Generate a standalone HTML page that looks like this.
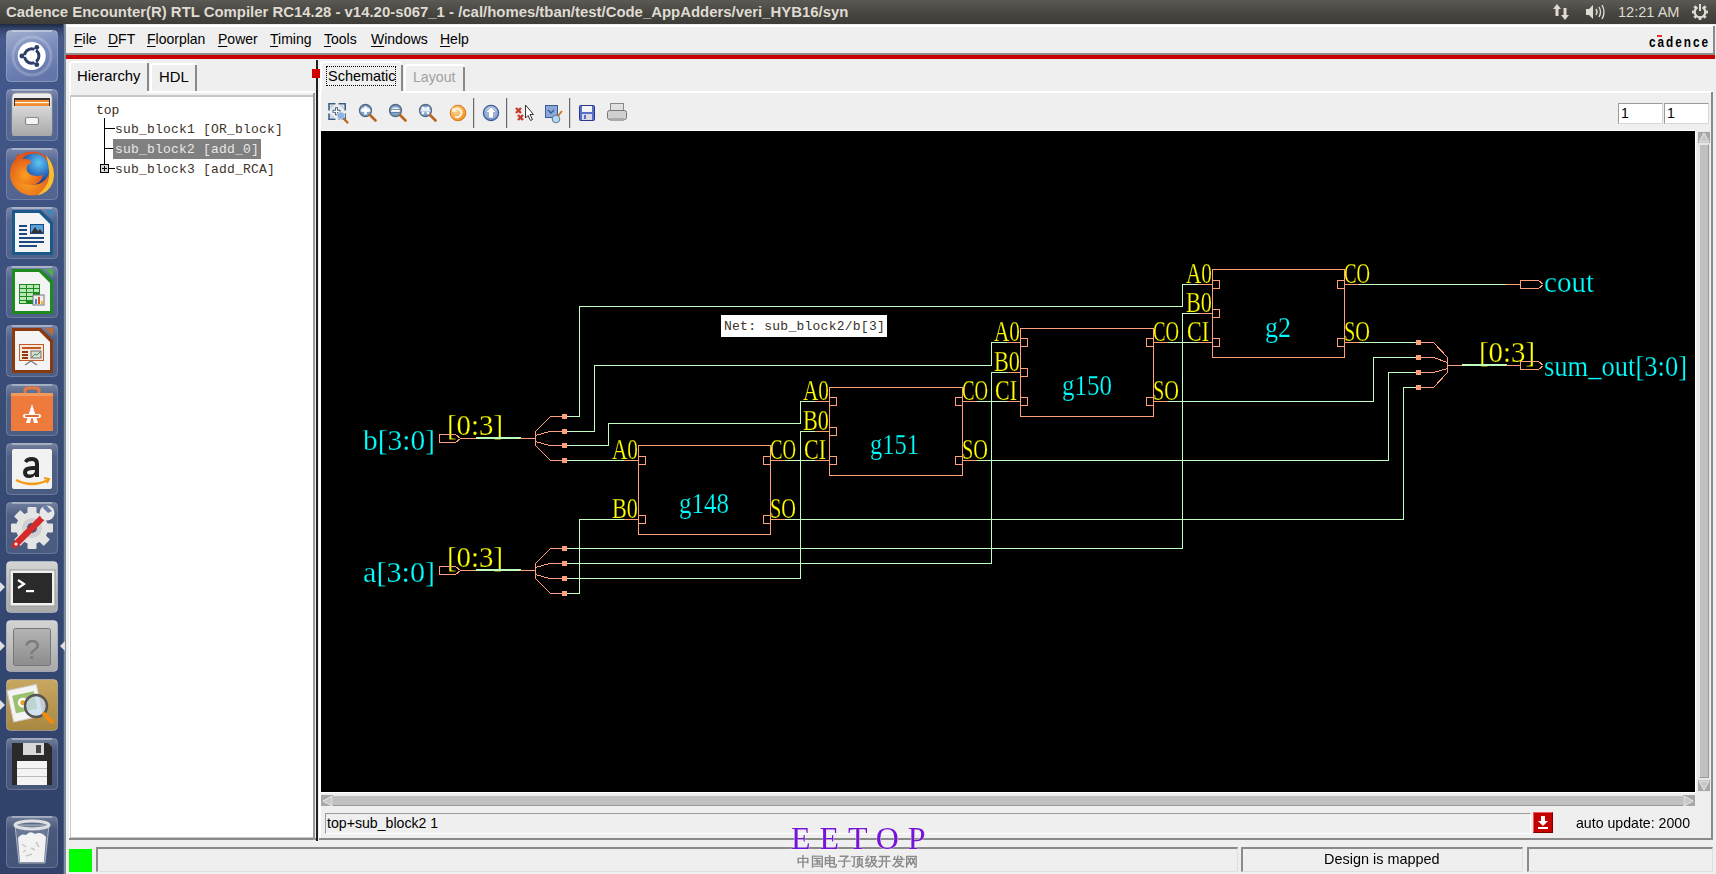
<!DOCTYPE html>
<html><head><meta charset="utf-8">
<style>
*{margin:0;padding:0;box-sizing:border-box}
html,body{width:1716px;height:874px;overflow:hidden;background:#efefef;font-family:"Liberation Sans",sans-serif;position:relative}
.a{position:absolute}
#title{left:0;top:0;width:1716px;height:24px;background:linear-gradient(#5b5953,#45443f 60%,#3e3d39);}
#title .t{left:6px;top:4px;font-weight:bold;font-size:14px;color:#dfdbd2;white-space:nowrap;letter-spacing:0px;transform:scaleX(1.065);transform-origin:0 0}
#launch{left:0;top:24px;width:65px;height:850px;background:linear-gradient(180deg,#1e2840 0px,#34466c 5px,#46598a 14px,#42578a 60px,#384c76 45%,#30426a 100%)}
.tile{position:absolute;left:6px;width:52px;height:52px;border-radius:5px;background:rgba(255,255,255,0.10);box-shadow:inset 0 0 0 1px rgba(255,255,255,0.18)}
.menu{top:30px;font-size:15px;color:#000;transform:scaleX(0.933);transform-origin:0 0;line-height:17px}
.menu u{text-decoration:underline;text-decoration-thickness:1px;text-underline-offset:2px}
.mono{font-family:"Liberation Mono",monospace}
.ui{font-size:15px;transform:scaleX(0.925);transform-origin:0 0;white-space:nowrap;line-height:17px}
.sep{width:2px;height:30px;background:#7a7a7a;top:98px}
</style></head><body>
<!-- title bar -->
<div id="title" class="a"><div class="a t">Cadence Encounter(R) RTL Compiler RC14.28 - v14.20-s067_1 - /cal/homes/tban/test/Code_AppAdders/veri_HYB16/syn</div>
<svg class="a" style="left:1540px;top:0" width="176" height="24">
<g fill="#dfdbd2">
<path d="M17 4 L13 9 H15.5 V16 H18.5 V9 H21Z"/>
<path d="M25 20 L29 15 H26.5 V8 H23.5 V15 H21Z"/>
<path d="M46 9 H49 L53 5 V19 L49 15 H46Z"/>
</g>
<g fill="none" stroke="#dfdbd2" stroke-width="1.4"><path d="M56 9 Q58 12 56 15"/><path d="M59 7 Q62 12 59 17"/><path d="M62 5 Q66 12 62 19"/></g>
<g transform="translate(160,12)"><g fill="#dfdbd2"><rect x="-1.4" y="-8" width="2.8" height="3.5" transform="rotate(45)"/><rect x="-1.4" y="-8" width="2.8" height="3.5" transform="rotate(-45)"/><rect x="-1.4" y="4.5" width="2.8" height="3.5"/><rect x="-8" y="-1.4" width="3.5" height="2.8"/><rect x="4.5" y="-1.4" width="3.5" height="2.8"/><rect x="-1.4" y="4.5" width="2.8" height="3.5" transform="rotate(45)"/><rect x="-1.4" y="4.5" width="2.8" height="3.5" transform="rotate(-45)"/></g>
<path d="M-2.6 -4.6 A5.3 5.3 0 1 0 2.6 -4.6" fill="none" stroke="#dfdbd2" stroke-width="2.2"/><rect x="-1" y="-8" width="2" height="7" fill="#dfdbd2"/></g>
</svg>
<div class="a" style="left:1618px;top:3px;font-size:15px;color:#dfdbd2;white-space:nowrap;transform:scaleX(0.97);transform-origin:0 0">12:21 AM</div>
</div>

<!-- launcher -->
<div id="launch" class="a"><div class="a" style="left:63px;top:0;width:2px;height:850px;background:linear-gradient(90deg,#2c3c60,#8aaad0)"></div>
<svg class="a" style="left:6px;top:6px" width="52" height="52"><defs><linearGradient id="ub" x1="0" y1="0" x2="0.3" y2="1"><stop offset="0" stop-color="#a4b0d0"/><stop offset="0.5" stop-color="#7a8cbc"/><stop offset="1" stop-color="#6476aa"/></linearGradient></defs><rect x="0.5" y="0.5" width="51" height="51" rx="4" fill="url(#ub)" stroke="rgba(255,255,255,0.3)"/><circle cx="26" cy="26" r="19" fill="none" stroke="rgba(255,255,255,0.2)" stroke-width="3"/><path d="M6 1 H46" stroke="rgba(255,255,255,0.7)" stroke-width="1.2"/><circle cx="25.7" cy="26" r="14" fill="#fff"/>
<circle cx="25.7" cy="26" r="7.2" fill="none" stroke="#2c3e6a" stroke-width="3"/>
<g stroke="#fff" stroke-width="1.6"><path d="M25.7 26 L14 26" /><path d="M25.7 26 L31.5 16"/><path d="M25.7 26 L31.5 36"/></g>
<circle cx="15.8" cy="26" r="2.4" fill="#2c3e6a"/>
<circle cx="30.8" cy="17.3" r="2.4" fill="#2c3e6a"/>
<circle cx="30.8" cy="34.7" r="2.4" fill="#2c3e6a"/></svg>
<svg class="a" style="left:6px;top:65px" width="52" height="52"><defs><linearGradient id="tg" x1="0" y1="0" x2="0" y2="1"><stop offset="0" stop-color="#fff" stop-opacity="0.30"/><stop offset="0.25" stop-color="#fff" stop-opacity="0.12"/><stop offset="1" stop-color="#fff" stop-opacity="0.10"/></linearGradient></defs><rect x="0.5" y="0.5" width="51" height="51" rx="4" fill="url(#tg)" stroke="rgba(255,255,255,0.22)"/><path d="M6 1 H46" stroke="rgba(255,255,255,0.7)" stroke-width="1.2"/><defs><linearGradient id="fl" x1="0" y1="0" x2="0" y2="1"><stop offset="0" stop-color="#f0f0f0"/><stop offset="1" stop-color="#c8c8c8"/></linearGradient>
<linearGradient id="fd" x1="0" y1="0" x2="0" y2="1"><stop offset="0" stop-color="#d8d8d8"/><stop offset="1" stop-color="#a8a8a8"/></linearGradient></defs>
<path d="M6 8 Q6 4 10 4 H42 Q46 4 46 8 V44 H6Z" fill="url(#fl)" stroke="#999" stroke-width="0.8"/>
<rect x="8" y="9" width="36" height="10" fill="#333"/>
<rect x="9" y="11" width="34" height="6" fill="#f08a30"/><rect x="9" y="13" width="34" height="1.2" fill="#fff4d8"/>
<path d="M7 17 H45 L46 45 Q46 47 44 47 H8 Q6 47 6 45Z" fill="url(#fd)"/>
<rect x="19.5" y="28.5" width="13" height="7" rx="1.5" fill="#f4f4f4" stroke="#8a8a8a" stroke-width="1.2"/></svg>
<svg class="a" style="left:6px;top:124px" width="52" height="52"><defs><linearGradient id="tg" x1="0" y1="0" x2="0" y2="1"><stop offset="0" stop-color="#fff" stop-opacity="0.30"/><stop offset="0.25" stop-color="#fff" stop-opacity="0.12"/><stop offset="1" stop-color="#fff" stop-opacity="0.10"/></linearGradient></defs><rect x="0.5" y="0.5" width="51" height="51" rx="4" fill="url(#tg)" stroke="rgba(255,255,255,0.22)"/><path d="M6 1 H46" stroke="rgba(255,255,255,0.7)" stroke-width="1.2"/><defs><radialGradient id="ffb" cx="0.65" cy="0.3" r="0.7"><stop offset="0" stop-color="#60c8f0"/><stop offset="0.6" stop-color="#2a6ac0"/><stop offset="1" stop-color="#1a3080"/></radialGradient>
<radialGradient id="ffo" cx="0.4" cy="0.7" r="0.7"><stop offset="0" stop-color="#f8a020"/><stop offset="1" stop-color="#e04a18"/></radialGradient></defs>
<circle cx="26" cy="25.5" r="22" fill="url(#ffo)"/>
<circle cx="28" cy="21" r="15.5" fill="url(#ffb)"/>
<path d="M7 18 L12 5 L17 11 Q25 10 25 15 Q19 17 21 23 Q25 30 37 27 Q35 36 26 37 Q12 37 8 26Z" fill="url(#ffo)"/>
<path d="M40 7 Q51 20 47 34 Q43 45 31 47.5 Q45 37 43 22 Q42 13 40 7Z" fill="#f8c030"/></svg>
<svg class="a" style="left:6px;top:183px" width="52" height="52"><defs><linearGradient id="tg" x1="0" y1="0" x2="0" y2="1"><stop offset="0" stop-color="#fff" stop-opacity="0.30"/><stop offset="0.25" stop-color="#fff" stop-opacity="0.12"/><stop offset="1" stop-color="#fff" stop-opacity="0.10"/></linearGradient></defs><rect x="0.5" y="0.5" width="51" height="51" rx="4" fill="url(#tg)" stroke="rgba(255,255,255,0.22)"/><path d="M6 1 H46" stroke="rgba(255,255,255,0.7)" stroke-width="1.2"/><path d="M6 3 H35 L47 15 V48 H6Z" fill="#1a5a8a"/>
<path d="M9 6 H33 L44 17 V45 H9Z" fill="#f4f4f4"/>
<path d="M39 3 H47 V11Z" fill="#3a8ac0"/>
<rect x="13" y="18" width="8" height="2" fill="#1a4a80"/><rect x="13" y="22" width="8" height="2" fill="#1a4a80"/><rect x="13" y="26" width="8" height="2" fill="#1a4a80"/>
<rect x="24" y="17" width="14" height="10" fill="#1a4a80"/><rect x="25" y="18" width="12" height="8" fill="#5aa0d8"/><path d="M25 26 L29 20 L32 24 L34 22 L37 26Z" fill="#333"/>
<rect x="13" y="30" width="25" height="2" fill="#1a4a80"/><rect x="13" y="34" width="25" height="2" fill="#1a4a80"/><rect x="13" y="38" width="18" height="2" fill="#1a4a80"/></svg>
<svg class="a" style="left:6px;top:242px" width="52" height="52"><defs><linearGradient id="tg" x1="0" y1="0" x2="0" y2="1"><stop offset="0" stop-color="#fff" stop-opacity="0.30"/><stop offset="0.25" stop-color="#fff" stop-opacity="0.12"/><stop offset="1" stop-color="#fff" stop-opacity="0.10"/></linearGradient></defs><rect x="0.5" y="0.5" width="51" height="51" rx="4" fill="url(#tg)" stroke="rgba(255,255,255,0.22)"/><path d="M6 1 H46" stroke="rgba(255,255,255,0.7)" stroke-width="1.2"/><path d="M6 3 H35 L47 15 V48 H6Z" fill="#1e8a1e"/>
<path d="M9 6 H33 L44 17 V45 H9Z" fill="#f4f4f4"/>
<path d="M39 3 H47 V11Z" fill="#4ab04a"/>
<rect x="13" y="18" width="21" height="20" fill="#1e8a1e"/>
<g fill="#b8e8b8"><rect x="14" y="19" width="6" height="3"/><rect x="21" y="19" width="6" height="3"/><rect x="28" y="19" width="5" height="3"/><rect x="14" y="23" width="6" height="3"/><rect x="21" y="23" width="6" height="3"/><rect x="28" y="23" width="5" height="3"/><rect x="14" y="27" width="6" height="3"/><rect x="21" y="27" width="6" height="3"/><rect x="14" y="31" width="6" height="3"/><rect x="21" y="31" width="6" height="3"/><rect x="14" y="35" width="6" height="2"/></g>
<rect x="27" y="29" width="11" height="10" fill="#eee" stroke="#777"/><rect x="29" y="33" width="2" height="5" fill="#3a8ae0"/><rect x="32" y="31" width="2" height="7" fill="#e05020"/><rect x="35" y="35" width="2" height="3" fill="#f0c020"/></svg>
<svg class="a" style="left:6px;top:301px" width="52" height="52"><defs><linearGradient id="tg" x1="0" y1="0" x2="0" y2="1"><stop offset="0" stop-color="#fff" stop-opacity="0.30"/><stop offset="0.25" stop-color="#fff" stop-opacity="0.12"/><stop offset="1" stop-color="#fff" stop-opacity="0.10"/></linearGradient></defs><rect x="0.5" y="0.5" width="51" height="51" rx="4" fill="url(#tg)" stroke="rgba(255,255,255,0.22)"/><path d="M6 1 H46" stroke="rgba(255,255,255,0.7)" stroke-width="1.2"/><path d="M6 3 H35 L47 15 V48 H6Z" fill="#8a3a10"/>
<path d="M9 6 H33 L44 17 V45 H9Z" fill="#f4f4f4"/>
<path d="M39 3 H47 V11Z" fill="#c06a3a"/>
<rect x="13" y="19" width="25" height="17" fill="#c05a20"/><rect x="14" y="20" width="23" height="15" fill="#fbe8dc"/>
<rect x="16" y="22" width="19" height="2" fill="#c05a20"/><rect x="16" y="26" width="6" height="2" fill="#8a3a10"/><rect x="16" y="29" width="6" height="2" fill="#8a3a10"/><rect x="16" y="32" width="6" height="2" fill="#8a3a10"/>
<rect x="25" y="26" width="10" height="7" fill="#ddd" stroke="#555" stroke-width="0.8"/><path d="M26 32 L29 29 L31 30 L34 27" stroke="#2a9a2a" fill="none"/>
<path d="M19 40 L25 36 L31 40" stroke="#777" fill="none" stroke-width="1.2"/></svg>
<svg class="a" style="left:6px;top:360px" width="52" height="52"><defs><linearGradient id="tg" x1="0" y1="0" x2="0" y2="1"><stop offset="0" stop-color="#fff" stop-opacity="0.30"/><stop offset="0.25" stop-color="#fff" stop-opacity="0.12"/><stop offset="1" stop-color="#fff" stop-opacity="0.10"/></linearGradient></defs><rect x="0.5" y="0.5" width="51" height="51" rx="4" fill="url(#tg)" stroke="rgba(255,255,255,0.22)"/><path d="M6 1 H46" stroke="rgba(255,255,255,0.7)" stroke-width="1.2"/><path d="M19 12 V7 Q19 4 22 4 H30 Q33 4 33 7 V12" fill="none" stroke="#e87840" stroke-width="3"/>
<rect x="5" y="9" width="42" height="38" fill="#ee7a3c"/>
<rect x="5" y="9" width="42" height="3" fill="#f09a60"/>
<path d="M20 39 L26 20 L32 39 H28 L26 32 L24 39Z" fill="#fff"/>
<rect x="17" y="30" width="18" height="4" rx="2" fill="#fff"/><rect x="19" y="31" width="14" height="2" rx="1" fill="#e86a2a"/></svg>
<svg class="a" style="left:6px;top:419px" width="52" height="52"><defs><linearGradient id="tg" x1="0" y1="0" x2="0" y2="1"><stop offset="0" stop-color="#fff" stop-opacity="0.30"/><stop offset="0.25" stop-color="#fff" stop-opacity="0.12"/><stop offset="1" stop-color="#fff" stop-opacity="0.10"/></linearGradient></defs><rect x="0.5" y="0.5" width="51" height="51" rx="4" fill="url(#tg)" stroke="rgba(255,255,255,0.22)"/><path d="M6 1 H46" stroke="rgba(255,255,255,0.7)" stroke-width="1.2"/><rect x="6" y="6" width="40" height="40" rx="2" fill="#f2f2f2"/>
<path d="M18 18 Q20 14 26 14 Q33 14 33 21 V34 H29 V32 Q27 35 23 35 Q17 35 17 29 Q17 23 27 23 H29 V21 Q29 18 26 18 Q22 18 21 20Z M29 27 H27 Q21 27 21 29.5 Q21 31.5 24 31.5 Q29 31.5 29 27Z" fill="#222"/>
<path d="M10 37 Q26 45 42 37" fill="none" stroke="#f39a10" stroke-width="2.5"/><path d="M38 35 L43 36 L41 40" fill="none" stroke="#f39a10" stroke-width="2"/></svg>
<svg class="a" style="left:6px;top:478px" width="52" height="52"><defs><linearGradient id="tg" x1="0" y1="0" x2="0" y2="1"><stop offset="0" stop-color="#fff" stop-opacity="0.30"/><stop offset="0.25" stop-color="#fff" stop-opacity="0.12"/><stop offset="1" stop-color="#fff" stop-opacity="0.10"/></linearGradient></defs><rect x="0.5" y="0.5" width="51" height="51" rx="4" fill="url(#tg)" stroke="rgba(255,255,255,0.22)"/><path d="M6 1 H46" stroke="rgba(255,255,255,0.7)" stroke-width="1.2"/><g transform="translate(26,26)"><circle r="16" fill="#e4e4e4"/>
<g fill="#e4e4e4"><rect x="-4.5" y="-21" width="9" height="42" rx="1"/><rect x="-21" y="-4.5" width="42" height="9" rx="1"/><rect x="-4.5" y="-21" width="9" height="42" rx="1" transform="rotate(45)"/><rect x="-4.5" y="-21" width="9" height="42" rx="1" transform="rotate(-45)"/></g>
<circle r="10" fill="#cfcfcf"/><circle r="5" fill="#3a5080"/></g>
<path d="M9 43 L37 15" stroke="#d42a2a" stroke-width="6.5" stroke-linecap="round"/>
<circle cx="41" cy="11" r="7.5" fill="#e8e8e8"/><path d="M39 2 L46 9 L42 11 L37 6Z" fill="#6a7ea8"/>
<circle cx="10" cy="42" r="1.5" fill="#fff"/></svg>
<svg class="a" style="left:6px;top:537px" width="52" height="52"><defs><linearGradient id="gg" x1="0" y1="0" x2="0" y2="1"><stop offset="0" stop-color="#d4d4d4"/><stop offset="1" stop-color="#a8a8a8"/></linearGradient></defs><rect x="0.5" y="0.5" width="51" height="51" rx="4" fill="url(#gg)" stroke="rgba(255,255,255,0.35)"/><rect x="4" y="9" width="45" height="36" fill="#f0f0f0" stroke="#999"/>
<rect x="7" y="12" width="39" height="30" fill="#2a2a2a"/>
<path d="M12 19 L18 23 L12 27" fill="none" stroke="#fff" stroke-width="2.2"/><rect x="20" y="29" width="8" height="2.2" fill="#fff"/></svg>
<svg class="a" style="left:6px;top:596px" width="52" height="52"><defs><linearGradient id="gg" x1="0" y1="0" x2="0" y2="1"><stop offset="0" stop-color="#d4d4d4"/><stop offset="1" stop-color="#a8a8a8"/></linearGradient></defs><rect x="0.5" y="0.5" width="51" height="51" rx="4" fill="url(#gg)" stroke="rgba(255,255,255,0.35)"/><defs><linearGradient id="hg" x1="0" y1="0" x2="0" y2="1"><stop offset="0" stop-color="#b4b4b4"/><stop offset="1" stop-color="#8c8c8c"/></linearGradient></defs><rect x="7.5" y="8.5" width="37" height="37" rx="2" fill="url(#hg)" stroke="#777"/>
<text x="26" y="39" font-size="28" text-anchor="middle" fill="#7a7a7a" font-family="Liberation Sans">?</text></svg>
<svg class="a" style="left:6px;top:655px" width="52" height="52"><defs><linearGradient id="gd" x1="0" y1="0" x2="0" y2="1"><stop offset="0" stop-color="#c8a860"/><stop offset="1" stop-color="#a88840"/></linearGradient></defs><rect x="0.5" y="0.5" width="51" height="51" rx="4" fill="url(#gd)" stroke="rgba(255,255,255,0.3)"/><g transform="rotate(-12 20 24)"><rect x="4" y="8" width="30" height="32" fill="#f4f4f4" stroke="#ccc"/><rect x="8" y="14" width="22" height="18" fill="#9ac070"/><circle cx="17" cy="23" r="5" fill="#fff"/><circle cx="17" cy="23" r="2.5" fill="#f0a020"/></g>
<circle cx="30" cy="27" r="11" fill="rgba(200,220,240,0.75)" stroke="#555" stroke-width="2.5"/>
<path d="M38 35 L46 43" stroke="#f08a10" stroke-width="4" stroke-linecap="round"/></svg>
<svg class="a" style="left:6px;top:714px" width="52" height="52"><defs><linearGradient id="tg" x1="0" y1="0" x2="0" y2="1"><stop offset="0" stop-color="#fff" stop-opacity="0.30"/><stop offset="0.25" stop-color="#fff" stop-opacity="0.12"/><stop offset="1" stop-color="#fff" stop-opacity="0.10"/></linearGradient></defs><rect x="0.5" y="0.5" width="51" height="51" rx="4" fill="url(#tg)" stroke="rgba(255,255,255,0.22)"/><path d="M6 1 H46" stroke="rgba(255,255,255,0.7)" stroke-width="1.2"/><path d="M6 5 H42 L46 9 V47 H6Z" fill="#2a2a2a"/>
<rect x="17" y="5" width="21" height="12" fill="#d8d8d8"/><rect x="30" y="7" width="5" height="8" fill="#444"/>
<rect x="11" y="23" width="30" height="24" fill="#f4f4f4"/><rect x="11" y="30" width="30" height="1" fill="#bbb"/><rect x="11" y="38" width="30" height="1" fill="#bbb"/></svg>
<svg class="a" style="left:6px;top:792px" width="52" height="52"><defs><linearGradient id="tg" x1="0" y1="0" x2="0" y2="1"><stop offset="0" stop-color="#fff" stop-opacity="0.30"/><stop offset="0.25" stop-color="#fff" stop-opacity="0.12"/><stop offset="1" stop-color="#fff" stop-opacity="0.10"/></linearGradient></defs><rect x="0.5" y="0.5" width="51" height="51" rx="4" fill="url(#tg)" stroke="rgba(255,255,255,0.22)"/><path d="M6 1 H46" stroke="rgba(255,255,255,0.7)" stroke-width="1.2"/><path d="M9 9 L13 47 H39 L43 9Z" fill="rgba(220,230,240,0.22)" stroke="rgba(230,230,230,0.6)"/>
<path d="M12 22 Q15 17 20 19 Q24 14 29 18 Q35 15 40 21 L38 46 H14Z" fill="#f2f2f2"/>
<path d="M16 28 l4 3 M30 26 l3 5 M20 40 l6 -2 M25 32 l4 2 M17 36 l3 -2" stroke="#c8c8c8" stroke-width="1.5"/>
<ellipse cx="26" cy="9" rx="17" ry="4" fill="none" stroke="#e0e0e0" stroke-width="3"/></svg>
<svg class="a" style="left:0;top:0" width="65" height="850"><polygon points="0,558 5,563 0,568" fill="#e0e0e0"/><polygon points="0,617 5,622 0,627" fill="#e0e0e0"/><polygon points="65,617 60,622 65,627" fill="#e0e0e0"/><polygon points="0,676 5,681 0,686" fill="#e0e0e0"/></svg>
</div>

<!-- window frame -->
<div class="a" style="left:65px;top:24px;width:1px;height:850px;background:#8a8a8a"></div>
<div class="a" style="left:66px;top:25px;width:1648px;height:2px;background:#fff"></div>
<div class="a" style="left:66px;top:53px;width:1648px;height:2px;background:#8c9090"></div>
<div class="a" style="left:66px;top:55px;width:1649px;height:4px;background:#c80000"></div>
<div class="a" style="left:1713px;top:26px;width:2px;height:29px;background:#8a8a8a"></div>

<!-- menu -->
<div class="a menu" style="left:74px"><u>F</u>ile</div>
<div class="a menu" style="left:108px"><u>D</u>FT</div>
<div class="a menu" style="left:147px"><u>F</u>loorplan</div>
<div class="a menu" style="left:218px"><u>P</u>ower</div>
<div class="a menu" style="left:270px"><u>T</u>iming</div>
<div class="a menu" style="left:324px"><u>T</u>ools</div>
<div class="a menu" style="left:371px"><u>W</u>indows</div>
<div class="a menu" style="left:440px"><u>H</u>elp</div>
<div class="a" style="left:1649px;top:34px;font-size:14px;font-weight:bold;letter-spacing:2.4px;color:#000;transform:scaleX(0.84);transform-origin:0 0">cadence</div>
<div class="a" style="left:1657px;top:35px;width:5px;height:2px;background:#e03030"></div>


<!-- ===== left panel ===== -->
<!-- tabs -->
<div class="a" style="left:69px;top:61px;width:80px;height:31px;background:#efefef;border-left:2px solid #fff;border-top:2px solid #fff;border-radius:4px 4px 0 0"></div>
<div class="a" style="left:147px;top:63px;width:2px;height:29px;background:#8a8a8a"></div>
<div class="a" style="left:150px;top:63px;width:47px;height:28px;border-left:2px solid #fff;border-top:2px solid #fff;border-radius:4px 4px 0 0"></div>
<div class="a" style="left:195px;top:65px;width:2px;height:26px;background:#8a8a8a"></div>
<div class="a" style="left:147px;top:91px;width:167px;height:2px;background:#fff"></div>
<div class="a ui" style="left:77px;top:67px;transform:scaleX(0.99)">Hierarchy</div>
<div class="a ui" style="left:159px;top:68px;transform:scaleX(0.99)">HDL</div>
<!-- panel frame -->
<div class="a" style="left:69px;top:93px;width:2px;height:746px;background:#fff"></div>
<div class="a" style="left:70px;top:95px;width:244px;height:745px;background:#c8c8c8"></div>
<div class="a" style="left:71px;top:97px;width:242px;height:740px;background:#fff"></div>
<div class="a" style="left:69px;top:838px;width:247px;height:2px;background:#8a8a8a"></div>
<div class="a" style="left:313px;top:93px;width:2px;height:747px;background:#9a9a9a"></div>
<!-- tree -->
<div class="a mono" style="left:96px;top:103px;font-size:13px;color:#3a2a1a">top</div>
<div class="a" style="left:104px;top:118px;width:1px;height:47px;background:#000"></div>
<div class="a" style="left:105px;top:128px;width:10px;height:1px;background:#000"></div>
<div class="a" style="left:105px;top:148px;width:10px;height:1px;background:#000"></div>
<div class="a" style="left:109px;top:168px;width:6px;height:1px;background:#000"></div>
<div class="a" style="left:100px;top:164px;width:9px;height:9px;border:1px solid #000;background:#d8d8d8"></div>
<div class="a" style="left:102px;top:168px;width:5px;height:1px;background:#000"></div>
<div class="a" style="left:104px;top:166px;width:1px;height:5px;background:#000"></div>
<div class="a" style="left:113px;top:139px;width:148px;height:20px;background:#808080"></div>
<div class="a mono" style="left:115px;top:122px;font-size:13px;color:#40342a;white-space:pre;letter-spacing:0.2px">sub_block1 [OR_block]</div>
<div class="a mono" style="left:115px;top:142px;font-size:13px;color:#e8e8e8;white-space:pre;letter-spacing:0.2px">sub_block2 [add_0]</div>
<div class="a mono" style="left:115px;top:162px;font-size:13px;color:#40342a;white-space:pre;letter-spacing:0.2px">sub_block3 [add_RCA]</div>

<!-- sash -->
<div class="a" style="left:316px;top:60px;width:2px;height:781px;background:#202020"></div>
<div class="a" style="left:312px;top:69px;width:9px;height:9px;background:#d00000"></div>

<!-- ===== right panel ===== -->
<div class="a" style="left:320px;top:61px;width:82px;height:31px;border-left:2px solid #fff;border-top:2px solid #fff;border-radius:4px 4px 0 0"></div>
<div class="a" style="left:401px;top:65px;width:2px;height:27px;background:#8a8a8a"></div>
<div class="a" style="left:404px;top:64px;width:61px;height:27px;border-left:2px solid #fff;border-top:2px solid #fff;border-radius:4px 4px 0 0"></div>
<div class="a" style="left:463px;top:67px;width:2px;height:24px;background:#8a8a8a"></div>
<div class="a" style="left:401px;top:91px;width:1312px;height:2px;background:#fff"></div>
<div class="a" style="left:326px;top:66px;width:70px;height:20px;border:1px dotted #000"></div>
<div class="a ui" style="left:328px;top:67px;transform:scaleX(0.965)">Schematic</div>
<div class="a ui" style="left:413px;top:68px;color:#a0a0a0;transform:scaleX(0.942)">Layout</div>
<div class="a" style="left:319px;top:92px;width:2px;height:747px;background:#fff"></div>
<div class="a" style="left:1711px;top:92px;width:2px;height:748px;background:#8a8a8a"></div>
<div class="a" style="left:319px;top:838px;width:1394px;height:2px;background:#8a8a8a"></div>

<!-- toolbar -->
<svg class="a" style="left:0;top:0" width="700" height="131">
<g fill="none" stroke="#3e5e84" stroke-width="1.6">
<path d="M329 110.5 V103.8 H335.5"/><path d="M338.5 103.8 H345.2 V110.5"/><path d="M329 113.5 V119.2 H335.5"/><path d="M345.2 113.5 V119.2 H338.5"/></g>
<g fill="none" stroke="#a8c0dc" stroke-width="1"><path d="M331 109 V106 H334"/><path d="M340 106 H343 V109"/><path d="M331 114 V117 H334"/></g>
<path d="M332.5 111.3 H340.5 M336.5 107.3 V115.3" stroke="#3e5e84" stroke-width="3"/>
<path d="M333.5 111.3 H339.5 M336.5 108.3 V114.3" stroke="#fff" stroke-width="1.2"/>
<circle cx="341" cy="115.8" r="3.9" fill="#8ab4e4" stroke="#dfe8f0" stroke-width="0.8"/><path d="M344 119 L347.5 122.5" stroke="#b8641a" stroke-width="2.2" stroke-linecap="round"/>
<circle cx="365.5" cy="110.5" r="6" fill="#7aa4d4" stroke="#56687e" stroke-width="1.3"/>
<path d="M360.2 111.5 A5.4 5.4 0 0 1 370.8 111.5Z" fill="#e4ecf4"/>
<path d="M361.5 110.5 H369.5 M365.5 106.5 V114.5" stroke="#fff" stroke-width="2.6"/>
<path d="M370.0 115.0 L375.5 120.5" stroke="#b8641a" stroke-width="2.6" stroke-linecap="round"/>
<circle cx="395.5" cy="110.5" r="6" fill="#7aa4d4" stroke="#56687e" stroke-width="1.3"/>
<path d="M390.2 111.5 A5.4 5.4 0 0 1 400.8 111.5Z" fill="#e4ecf4"/>
<path d="M390.5 110.8 H400.5" stroke="#56687e" stroke-width="3.6"/><path d="M391.2 110.8 H399.8" stroke="#fff" stroke-width="2.2"/>
<path d="M400.0 115.0 L405.5 120.5" stroke="#b8641a" stroke-width="2.6" stroke-linecap="round"/>
<circle cx="425.5" cy="110.5" r="6" fill="#7aa4d4" stroke="#56687e" stroke-width="1.3"/>
<path d="M420.2 111.5 A5.4 5.4 0 0 1 430.8 111.5Z" fill="#e4ecf4"/>
<path d="M422 107 l2 2 M429 107 l-2 2 M422 114 l2 -2 M429 114 l-2 -2" stroke="#fff" stroke-width="2.2"/>
<path d="M430.0 115.0 L435.5 120.5" stroke="#b8641a" stroke-width="2.6" stroke-linecap="round"/>
<defs><radialGradient id="og" cx="0.4" cy="0.35" r="0.7"><stop offset="0" stop-color="#f8d8a0"/><stop offset="0.6" stop-color="#f4ae50"/><stop offset="1" stop-color="#e88a20"/></radialGradient></defs><circle cx="458" cy="113" r="7.8" fill="url(#og)" stroke="#e07818" stroke-width="1"/><path d="M454 110 A4.2 4.2 0 1 1 455 116.5" fill="none" stroke="#fff6e0" stroke-width="1.8"/><path d="M452.5 107.5 L456.5 111.5 L452 112Z" fill="#fff6e0"/>
<rect x="473" y="98" width="1.2" height="30" fill="#686868"/>
<rect x="506" y="98" width="1.2" height="30" fill="#686868"/>
<rect x="569" y="98" width="1.2" height="30" fill="#686868"/>
<defs><radialGradient id="ug" cx="0.5" cy="0.3" r="0.75"><stop offset="0" stop-color="#d8e4f4"/><stop offset="0.7" stop-color="#8aa4d4"/><stop offset="1" stop-color="#5a78b8"/></radialGradient></defs><circle cx="491" cy="113" r="7.6" fill="url(#ug)" stroke="#3a5898" stroke-width="1.2"/><path d="M491 107 L496.5 112.5 H493.5 V118 H488.5 V112.5 H485.5Z" fill="#fff" stroke="#7a90b8" stroke-width="0.6"/>
<path d="M516 108 L521 113 M521 108 L516 113 M518 115 L523 120 M523 115 L518 120" stroke="#c83a2a" stroke-width="2.4"/>
<path d="M525.5 105 V118 L528 115.5 L530.5 120.5 L532.5 119.5 L530 114.5 L533.5 114.5Z" fill="#fff" stroke="#333" stroke-width="1"/>
<rect x="545.5" y="105.5" width="12" height="12" fill="#8aa8d8" stroke="#3a5a98"/><path d="M548 110 L551 113 L554 110" stroke="#3a5a98" fill="none" stroke-width="1.3"/><circle cx="556" cy="119" r="3.8" fill="#b8d8f0" stroke="#5a7a9a"/><path d="M558 116 L562 111" stroke="#d07020" stroke-width="1.8"/>
<rect x="579.5" y="105.5" width="15" height="15" rx="1" fill="#5a70c8" stroke="#2a3a8a"/><rect x="582" y="106" width="10" height="6" fill="#f4f4f4"/><rect x="582" y="114" width="10" height="6" fill="#d8d8e8"/><rect x="584" y="115" width="2" height="4" fill="#5a70c8"/>
<rect x="610.5" y="103.5" width="13" height="7" fill="#e0e0e0" stroke="#888"/><rect x="607.5" y="110.5" width="19" height="9" rx="2" fill="#d0d0d0" stroke="#777"/><rect x="610" y="118" width="14" height="3" fill="#aaa"/>
</svg>
<div class="a" style="left:1618px;top:103px;width:45px;height:21px;background:#fff;border:1px solid #9a9a9a;border-right-color:#d8d8d8;border-bottom-color:#d8d8d8"></div>
<div class="a" style="left:1664px;top:103px;width:45px;height:21px;background:#fff;border:1px solid #9a9a9a;border-right-color:#d8d8d8;border-bottom-color:#d8d8d8"></div>
<div class="a" style="left:1621px;top:105px;font-size:14px">1</div>
<div class="a" style="left:1667px;top:105px;font-size:14px">1</div>

<!-- canvas -->
<div class="a" style="left:320px;top:130px;width:1376px;height:663px;background:#fff"></div>
<div class="a" style="left:321px;top:131px;width:1374px;height:661px;background:#000"></div>
<svg class="a" style="left:0;top:0;will-change:transform" width="1716" height="874" shape-rendering="crispEdges" font-family="Liberation Serif">
<text x="612" y="459" textLength="26" lengthAdjust="spacingAndGlyphs" fill="#ffff00" font-size="30" stroke="#000" stroke-width="0.25">A0</text>
<text x="612" y="518" textLength="26" lengthAdjust="spacingAndGlyphs" fill="#ffff00" font-size="30" stroke="#000" stroke-width="0.25">B0</text>
<text x="770" y="459" textLength="26" lengthAdjust="spacingAndGlyphs" fill="#ffff00" font-size="30" stroke="#000" stroke-width="0.25">CO</text>
<text x="770" y="518" textLength="26" lengthAdjust="spacingAndGlyphs" fill="#ffff00" font-size="30" stroke="#000" stroke-width="0.25">SO</text>
<text x="679" y="513" textLength="50" lengthAdjust="spacingAndGlyphs" fill="#00ffff" font-size="30" stroke="#000" stroke-width="0.25">g148</text>
<text x="803" y="400" textLength="26" lengthAdjust="spacingAndGlyphs" fill="#ffff00" font-size="30" stroke="#000" stroke-width="0.25">A0</text>
<text x="803" y="430" textLength="26" lengthAdjust="spacingAndGlyphs" fill="#ffff00" font-size="30" stroke="#000" stroke-width="0.25">B0</text>
<text x="804" y="459" textLength="22" lengthAdjust="spacingAndGlyphs" fill="#ffff00" font-size="30" stroke="#000" stroke-width="0.25">CI</text>
<text x="962" y="400" textLength="26" lengthAdjust="spacingAndGlyphs" fill="#ffff00" font-size="30" stroke="#000" stroke-width="0.25">CO</text>
<text x="962" y="459" textLength="26" lengthAdjust="spacingAndGlyphs" fill="#ffff00" font-size="30" stroke="#000" stroke-width="0.25">SO</text>
<text x="870" y="454" textLength="49" lengthAdjust="spacingAndGlyphs" fill="#00ffff" font-size="30" stroke="#000" stroke-width="0.25">g151</text>
<text x="994" y="341" textLength="26" lengthAdjust="spacingAndGlyphs" fill="#ffff00" font-size="30" stroke="#000" stroke-width="0.25">A0</text>
<text x="994" y="371" textLength="26" lengthAdjust="spacingAndGlyphs" fill="#ffff00" font-size="30" stroke="#000" stroke-width="0.25">B0</text>
<text x="995" y="400" textLength="22" lengthAdjust="spacingAndGlyphs" fill="#ffff00" font-size="30" stroke="#000" stroke-width="0.25">CI</text>
<text x="1153" y="341" textLength="26" lengthAdjust="spacingAndGlyphs" fill="#ffff00" font-size="30" stroke="#000" stroke-width="0.25">CO</text>
<text x="1153" y="400" textLength="26" lengthAdjust="spacingAndGlyphs" fill="#ffff00" font-size="30" stroke="#000" stroke-width="0.25">SO</text>
<text x="1062" y="395" textLength="50" lengthAdjust="spacingAndGlyphs" fill="#00ffff" font-size="30" stroke="#000" stroke-width="0.25">g150</text>
<text x="1186" y="283" textLength="26" lengthAdjust="spacingAndGlyphs" fill="#ffff00" font-size="30" stroke="#000" stroke-width="0.25">A0</text>
<text x="1186" y="312" textLength="26" lengthAdjust="spacingAndGlyphs" fill="#ffff00" font-size="30" stroke="#000" stroke-width="0.25">B0</text>
<text x="1187" y="341" textLength="22" lengthAdjust="spacingAndGlyphs" fill="#ffff00" font-size="30" stroke="#000" stroke-width="0.25">CI</text>
<text x="1344" y="283" textLength="26" lengthAdjust="spacingAndGlyphs" fill="#ffff00" font-size="30" stroke="#000" stroke-width="0.25">CO</text>
<text x="1344" y="341" textLength="26" lengthAdjust="spacingAndGlyphs" fill="#ffff00" font-size="30" stroke="#000" stroke-width="0.25">SO</text>
<text x="1265" y="337" textLength="26" lengthAdjust="spacingAndGlyphs" fill="#00ffff" font-size="30" stroke="#000" stroke-width="0.25">g2</text>
<text x="363" y="450" textLength="72" lengthAdjust="spacingAndGlyphs" fill="#00ffff" font-size="29" stroke="#000" stroke-width="0.25">b[3:0]</text>
<text x="447" y="435" textLength="56" lengthAdjust="spacingAndGlyphs" fill="#ffff00" font-size="30" stroke="#000" stroke-width="0.25">[0:3]</text>
<text x="363" y="582" textLength="72" lengthAdjust="spacingAndGlyphs" fill="#00ffff" font-size="29" stroke="#000" stroke-width="0.25">a[3:0]</text>
<text x="447" y="567" textLength="56" lengthAdjust="spacingAndGlyphs" fill="#ffff00" font-size="30" stroke="#000" stroke-width="0.25">[0:3]</text>
<text x="1544" y="292" textLength="50" lengthAdjust="spacingAndGlyphs" fill="#00ffff" font-size="29" stroke="#000" stroke-width="0.25">cout</text>
<text x="1479" y="362" textLength="56" lengthAdjust="spacingAndGlyphs" fill="#ffff00" font-size="30" stroke="#000" stroke-width="0.25">[0:3]</text>
<text x="1544" y="376" textLength="143" lengthAdjust="spacingAndGlyphs" fill="#00ffff" font-size="29" stroke="#000" stroke-width="0.25">sum_out[3:0]</text>
<rect x="638" y="445" width="133" height="1" fill="#ffa07a"/>
<rect x="638" y="534" width="133" height="1" fill="#ffa07a"/>
<rect x="638" y="445" width="1" height="90" fill="#ffa07a"/>
<rect x="770" y="445" width="1" height="90" fill="#ffa07a"/>
<rect x="638" y="456" width="8" height="1" fill="#ffa07a"/>
<rect x="638" y="464" width="8" height="1" fill="#ffa07a"/>
<rect x="638" y="456" width="1" height="9" fill="#ffa07a"/>
<rect x="645" y="456" width="1" height="9" fill="#ffa07a"/>
<rect x="623" y="460" width="16" height="1" fill="#ffa07a"/>
<rect x="638" y="515" width="8" height="1" fill="#ffa07a"/>
<rect x="638" y="523" width="8" height="1" fill="#ffa07a"/>
<rect x="638" y="515" width="1" height="9" fill="#ffa07a"/>
<rect x="645" y="515" width="1" height="9" fill="#ffa07a"/>
<rect x="623" y="519" width="16" height="1" fill="#ffa07a"/>
<rect x="763" y="456" width="8" height="1" fill="#ffa07a"/>
<rect x="763" y="464" width="8" height="1" fill="#ffa07a"/>
<rect x="763" y="456" width="1" height="9" fill="#ffa07a"/>
<rect x="770" y="456" width="1" height="9" fill="#ffa07a"/>
<rect x="770" y="460" width="16" height="1" fill="#ffa07a"/>
<rect x="763" y="515" width="8" height="1" fill="#ffa07a"/>
<rect x="763" y="523" width="8" height="1" fill="#ffa07a"/>
<rect x="763" y="515" width="1" height="9" fill="#ffa07a"/>
<rect x="770" y="515" width="1" height="9" fill="#ffa07a"/>
<rect x="770" y="519" width="16" height="1" fill="#ffa07a"/>
<rect x="829" y="387" width="134" height="1" fill="#ffa07a"/>
<rect x="829" y="475" width="134" height="1" fill="#ffa07a"/>
<rect x="829" y="387" width="1" height="89" fill="#ffa07a"/>
<rect x="962" y="387" width="1" height="89" fill="#ffa07a"/>
<rect x="829" y="397" width="8" height="1" fill="#ffa07a"/>
<rect x="829" y="405" width="8" height="1" fill="#ffa07a"/>
<rect x="829" y="397" width="1" height="9" fill="#ffa07a"/>
<rect x="836" y="397" width="1" height="9" fill="#ffa07a"/>
<rect x="814" y="401" width="16" height="1" fill="#ffa07a"/>
<rect x="829" y="427" width="8" height="1" fill="#ffa07a"/>
<rect x="829" y="435" width="8" height="1" fill="#ffa07a"/>
<rect x="829" y="427" width="1" height="9" fill="#ffa07a"/>
<rect x="836" y="427" width="1" height="9" fill="#ffa07a"/>
<rect x="814" y="431" width="16" height="1" fill="#ffa07a"/>
<rect x="829" y="456" width="8" height="1" fill="#ffa07a"/>
<rect x="829" y="464" width="8" height="1" fill="#ffa07a"/>
<rect x="829" y="456" width="1" height="9" fill="#ffa07a"/>
<rect x="836" y="456" width="1" height="9" fill="#ffa07a"/>
<rect x="814" y="460" width="16" height="1" fill="#ffa07a"/>
<rect x="955" y="397" width="8" height="1" fill="#ffa07a"/>
<rect x="955" y="405" width="8" height="1" fill="#ffa07a"/>
<rect x="955" y="397" width="1" height="9" fill="#ffa07a"/>
<rect x="962" y="397" width="1" height="9" fill="#ffa07a"/>
<rect x="962" y="401" width="16" height="1" fill="#ffa07a"/>
<rect x="955" y="456" width="8" height="1" fill="#ffa07a"/>
<rect x="955" y="464" width="8" height="1" fill="#ffa07a"/>
<rect x="955" y="456" width="1" height="9" fill="#ffa07a"/>
<rect x="962" y="456" width="1" height="9" fill="#ffa07a"/>
<rect x="962" y="460" width="16" height="1" fill="#ffa07a"/>
<rect x="1020" y="328" width="134" height="1" fill="#ffa07a"/>
<rect x="1020" y="416" width="134" height="1" fill="#ffa07a"/>
<rect x="1020" y="328" width="1" height="89" fill="#ffa07a"/>
<rect x="1153" y="328" width="1" height="89" fill="#ffa07a"/>
<rect x="1020" y="338" width="8" height="1" fill="#ffa07a"/>
<rect x="1020" y="346" width="8" height="1" fill="#ffa07a"/>
<rect x="1020" y="338" width="1" height="9" fill="#ffa07a"/>
<rect x="1027" y="338" width="1" height="9" fill="#ffa07a"/>
<rect x="1005" y="342" width="16" height="1" fill="#ffa07a"/>
<rect x="1020" y="368" width="8" height="1" fill="#ffa07a"/>
<rect x="1020" y="376" width="8" height="1" fill="#ffa07a"/>
<rect x="1020" y="368" width="1" height="9" fill="#ffa07a"/>
<rect x="1027" y="368" width="1" height="9" fill="#ffa07a"/>
<rect x="1005" y="372" width="16" height="1" fill="#ffa07a"/>
<rect x="1020" y="397" width="8" height="1" fill="#ffa07a"/>
<rect x="1020" y="405" width="8" height="1" fill="#ffa07a"/>
<rect x="1020" y="397" width="1" height="9" fill="#ffa07a"/>
<rect x="1027" y="397" width="1" height="9" fill="#ffa07a"/>
<rect x="1005" y="401" width="16" height="1" fill="#ffa07a"/>
<rect x="1146" y="338" width="8" height="1" fill="#ffa07a"/>
<rect x="1146" y="346" width="8" height="1" fill="#ffa07a"/>
<rect x="1146" y="338" width="1" height="9" fill="#ffa07a"/>
<rect x="1153" y="338" width="1" height="9" fill="#ffa07a"/>
<rect x="1153" y="342" width="16" height="1" fill="#ffa07a"/>
<rect x="1146" y="397" width="8" height="1" fill="#ffa07a"/>
<rect x="1146" y="405" width="8" height="1" fill="#ffa07a"/>
<rect x="1146" y="397" width="1" height="9" fill="#ffa07a"/>
<rect x="1153" y="397" width="1" height="9" fill="#ffa07a"/>
<rect x="1153" y="401" width="16" height="1" fill="#ffa07a"/>
<rect x="1212" y="269" width="133" height="1" fill="#ffa07a"/>
<rect x="1212" y="357" width="133" height="1" fill="#ffa07a"/>
<rect x="1212" y="269" width="1" height="89" fill="#ffa07a"/>
<rect x="1344" y="269" width="1" height="89" fill="#ffa07a"/>
<rect x="1212" y="280" width="8" height="1" fill="#ffa07a"/>
<rect x="1212" y="288" width="8" height="1" fill="#ffa07a"/>
<rect x="1212" y="280" width="1" height="9" fill="#ffa07a"/>
<rect x="1219" y="280" width="1" height="9" fill="#ffa07a"/>
<rect x="1197" y="284" width="16" height="1" fill="#ffa07a"/>
<rect x="1212" y="309" width="8" height="1" fill="#ffa07a"/>
<rect x="1212" y="317" width="8" height="1" fill="#ffa07a"/>
<rect x="1212" y="309" width="1" height="9" fill="#ffa07a"/>
<rect x="1219" y="309" width="1" height="9" fill="#ffa07a"/>
<rect x="1197" y="313" width="16" height="1" fill="#ffa07a"/>
<rect x="1212" y="338" width="8" height="1" fill="#ffa07a"/>
<rect x="1212" y="346" width="8" height="1" fill="#ffa07a"/>
<rect x="1212" y="338" width="1" height="9" fill="#ffa07a"/>
<rect x="1219" y="338" width="1" height="9" fill="#ffa07a"/>
<rect x="1197" y="342" width="16" height="1" fill="#ffa07a"/>
<rect x="1337" y="280" width="8" height="1" fill="#ffa07a"/>
<rect x="1337" y="288" width="8" height="1" fill="#ffa07a"/>
<rect x="1337" y="280" width="1" height="9" fill="#ffa07a"/>
<rect x="1344" y="280" width="1" height="9" fill="#ffa07a"/>
<rect x="1344" y="284" width="16" height="1" fill="#ffa07a"/>
<rect x="1337" y="338" width="8" height="1" fill="#ffa07a"/>
<rect x="1337" y="346" width="8" height="1" fill="#ffa07a"/>
<rect x="1337" y="338" width="1" height="9" fill="#ffa07a"/>
<rect x="1344" y="338" width="1" height="9" fill="#ffa07a"/>
<rect x="1344" y="342" width="16" height="1" fill="#ffa07a"/>
<rect x="439" y="434" width="17" height="1" fill="#ffa07a"/>
<line x1="455.5" y1="434.5" x2="460.5" y2="438.5" stroke="#ffa07a" stroke-width="1"/>
<line x1="460.5" y1="438.5" x2="455.5" y2="442.5" stroke="#ffa07a" stroke-width="1"/>
<rect x="439" y="442" width="17" height="1" fill="#ffa07a"/>
<rect x="439" y="434" width="1" height="9" fill="#ffa07a"/>
<rect x="460" y="438" width="17" height="1" fill="#ffa07a"/>
<rect x="476" y="437" width="45" height="2" fill="#c1ffc1"/>
<rect x="520" y="438" width="16" height="1" fill="#ffa07a"/>
<rect x="535" y="431" width="1" height="15" fill="#ffa07a"/>
<line x1="535.5" y1="431.5" x2="550.5" y2="416.5" stroke="#ffa07a" stroke-width="1"/>
<rect x="550" y="416" width="13" height="1" fill="#ffa07a"/>
<line x1="535.5" y1="435.5" x2="549.5" y2="431.5" stroke="#ffa07a" stroke-width="1"/>
<rect x="549" y="431" width="14" height="1" fill="#ffa07a"/>
<line x1="535.5" y1="441.5" x2="549.5" y2="445.5" stroke="#ffa07a" stroke-width="1"/>
<rect x="549" y="445" width="14" height="1" fill="#ffa07a"/>
<line x1="535.5" y1="445.5" x2="550.5" y2="460.5" stroke="#ffa07a" stroke-width="1"/>
<rect x="550" y="460" width="13" height="1" fill="#ffa07a"/>
<rect x="562" y="414" width="5" height="5" fill="#ffa07a"/>
<rect x="562" y="429" width="5" height="5" fill="#ffa07a"/>
<rect x="562" y="443" width="5" height="5" fill="#ffa07a"/>
<rect x="562" y="458" width="5" height="5" fill="#ffa07a"/>
<rect x="439" y="566" width="17" height="1" fill="#ffa07a"/>
<line x1="455.5" y1="566.5" x2="460.5" y2="570.5" stroke="#ffa07a" stroke-width="1"/>
<line x1="460.5" y1="570.5" x2="455.5" y2="574.5" stroke="#ffa07a" stroke-width="1"/>
<rect x="439" y="574" width="17" height="1" fill="#ffa07a"/>
<rect x="439" y="566" width="1" height="9" fill="#ffa07a"/>
<rect x="460" y="570" width="17" height="1" fill="#ffa07a"/>
<rect x="476" y="569" width="45" height="2" fill="#c1ffc1"/>
<rect x="520" y="570" width="16" height="1" fill="#ffa07a"/>
<rect x="535" y="563" width="1" height="16" fill="#ffa07a"/>
<line x1="535.5" y1="563.5" x2="550.5" y2="548.5" stroke="#ffa07a" stroke-width="1"/>
<rect x="550" y="548" width="13" height="1" fill="#ffa07a"/>
<line x1="535.5" y1="567.5" x2="549.5" y2="563.5" stroke="#ffa07a" stroke-width="1"/>
<rect x="549" y="563" width="14" height="1" fill="#ffa07a"/>
<line x1="535.5" y1="574.5" x2="549.5" y2="578.5" stroke="#ffa07a" stroke-width="1"/>
<rect x="549" y="578" width="14" height="1" fill="#ffa07a"/>
<line x1="535.5" y1="578.5" x2="550.5" y2="593.5" stroke="#ffa07a" stroke-width="1"/>
<rect x="550" y="593" width="13" height="1" fill="#ffa07a"/>
<rect x="562" y="546" width="5" height="5" fill="#ffa07a"/>
<rect x="562" y="561" width="5" height="5" fill="#ffa07a"/>
<rect x="562" y="576" width="5" height="5" fill="#ffa07a"/>
<rect x="562" y="591" width="5" height="5" fill="#ffa07a"/>
<rect x="567" y="416" width="13" height="1" fill="#c1ffc1"/>
<rect x="579" y="306" width="1" height="111" fill="#c1ffc1"/>
<rect x="579" y="306" width="604" height="1" fill="#c1ffc1"/>
<rect x="1182" y="284" width="1" height="23" fill="#c1ffc1"/>
<rect x="1182" y="284" width="16" height="1" fill="#c1ffc1"/>
<rect x="567" y="431" width="28" height="1" fill="#c1ffc1"/>
<rect x="594" y="365" width="1" height="67" fill="#c1ffc1"/>
<rect x="594" y="365" width="398" height="1" fill="#c1ffc1"/>
<rect x="991" y="342" width="1" height="24" fill="#c1ffc1"/>
<rect x="991" y="342" width="16" height="1" fill="#c1ffc1"/>
<rect x="567" y="445" width="42" height="1" fill="#c1ffc1"/>
<rect x="608" y="423" width="1" height="23" fill="#c1ffc1"/>
<rect x="608" y="423" width="193" height="1" fill="#c1ffc1"/>
<rect x="800" y="401" width="1" height="23" fill="#c1ffc1"/>
<rect x="800" y="401" width="15" height="1" fill="#c1ffc1"/>
<rect x="567" y="460" width="57" height="1" fill="#c1ffc1"/>
<rect x="567" y="548" width="616" height="1" fill="#c1ffc1"/>
<rect x="1182" y="313" width="1" height="236" fill="#c1ffc1"/>
<rect x="1182" y="313" width="16" height="1" fill="#c1ffc1"/>
<rect x="567" y="563" width="425" height="1" fill="#c1ffc1"/>
<rect x="991" y="372" width="1" height="192" fill="#c1ffc1"/>
<rect x="991" y="372" width="16" height="1" fill="#c1ffc1"/>
<rect x="567" y="578" width="234" height="1" fill="#c1ffc1"/>
<rect x="800" y="431" width="1" height="148" fill="#c1ffc1"/>
<rect x="800" y="431" width="15" height="1" fill="#c1ffc1"/>
<rect x="567" y="593" width="13" height="1" fill="#c1ffc1"/>
<rect x="579" y="519" width="1" height="75" fill="#c1ffc1"/>
<rect x="579" y="519" width="45" height="1" fill="#c1ffc1"/>
<rect x="785" y="460" width="30" height="1" fill="#c1ffc1"/>
<rect x="977" y="401" width="30" height="1" fill="#c1ffc1"/>
<rect x="1168" y="342" width="30" height="1" fill="#c1ffc1"/>
<rect x="1359" y="284" width="148" height="1" fill="#c1ffc1"/>
<rect x="1506" y="284" width="15" height="1" fill="#ffa07a"/>
<rect x="1520" y="280" width="19" height="1" fill="#ffa07a"/>
<line x1="1538.5" y1="280.5" x2="1543.5" y2="284.5" stroke="#ffa07a" stroke-width="1"/>
<line x1="1543.5" y1="284.5" x2="1538.5" y2="288.5" stroke="#ffa07a" stroke-width="1"/>
<rect x="1520" y="288" width="19" height="1" fill="#ffa07a"/>
<rect x="1520" y="280" width="1" height="9" fill="#ffa07a"/>
<rect x="1359" y="342" width="58" height="1" fill="#c1ffc1"/>
<rect x="977" y="460" width="412" height="1" fill="#c1ffc1"/>
<rect x="1388" y="372" width="1" height="89" fill="#c1ffc1"/>
<rect x="1388" y="372" width="29" height="1" fill="#c1ffc1"/>
<rect x="1168" y="401" width="206" height="1" fill="#c1ffc1"/>
<rect x="1373" y="357" width="1" height="45" fill="#c1ffc1"/>
<rect x="1373" y="357" width="44" height="1" fill="#c1ffc1"/>
<rect x="785" y="519" width="619" height="1" fill="#c1ffc1"/>
<rect x="1403" y="387" width="1" height="133" fill="#c1ffc1"/>
<rect x="1403" y="387" width="14" height="1" fill="#c1ffc1"/>
<rect x="1416" y="340" width="5" height="5" fill="#ffa07a"/>
<rect x="1416" y="355" width="5" height="5" fill="#ffa07a"/>
<rect x="1416" y="370" width="5" height="5" fill="#ffa07a"/>
<rect x="1416" y="385" width="5" height="5" fill="#ffa07a"/>
<rect x="1421" y="342" width="13" height="1" fill="#ffa07a"/>
<line x1="1433.5" y1="342.5" x2="1447.5" y2="357.5" stroke="#ffa07a" stroke-width="1"/>
<rect x="1421" y="357" width="13" height="1" fill="#ffa07a"/>
<line x1="1433.5" y1="357.5" x2="1447.5" y2="362.5" stroke="#ffa07a" stroke-width="1"/>
<rect x="1421" y="372" width="13" height="1" fill="#ffa07a"/>
<line x1="1433.5" y1="372.5" x2="1447.5" y2="368.5" stroke="#ffa07a" stroke-width="1"/>
<rect x="1421" y="387" width="13" height="1" fill="#ffa07a"/>
<line x1="1433.5" y1="387.5" x2="1447.5" y2="372.5" stroke="#ffa07a" stroke-width="1"/>
<rect x="1447" y="357" width="1" height="16" fill="#ffa07a"/>
<rect x="1447" y="365" width="16" height="1" fill="#ffa07a"/>
<rect x="1462" y="364" width="45" height="2" fill="#c1ffc1"/>
<rect x="1506" y="365" width="15" height="1" fill="#ffa07a"/>
<rect x="1520" y="361" width="19" height="1" fill="#ffa07a"/>
<line x1="1538.5" y1="361.5" x2="1543.5" y2="365.5" stroke="#ffa07a" stroke-width="1"/>
<line x1="1543.5" y1="365.5" x2="1538.5" y2="369.5" stroke="#ffa07a" stroke-width="1"/>
<rect x="1520" y="369" width="19" height="1" fill="#ffa07a"/>
<rect x="1520" y="361" width="1" height="9" fill="#ffa07a"/>
</svg>
<!-- tooltip -->
<div class="a mono" style="left:721px;top:315px;width:166px;height:22px;background:#fff;font-size:13px;color:#3a3028;padding:4px 0 0 3px;white-space:pre;letter-spacing:0.25px">Net: sub_block2/b[3]</div>

<!-- vertical scrollbar -->
<div class="a" style="left:1697px;top:131px;width:13px;height:661px;background:#e8e8e8"></div>
<div class="a" style="left:1698px;top:132px;width:12px;height:11px;background:#a8a8a8"></div>
<div class="a" style="left:1699px;top:144px;width:10px;height:634px;background:#c0c0c0;border:1px solid #e8e8e8;border-right-color:#9a9a9a;border-bottom-color:#9a9a9a"></div>
<div class="a" style="left:1698px;top:780px;width:12px;height:11px;background:#a8a8a8"></div>
<svg class="a" style="left:1697px;top:131px" width="14" height="662"><polygon points="2,11 7,2 12,11" fill="#c8c8c8" stroke="#e8e8e8" stroke-width="1"/><polygon points="2,650 12,650 7,659" fill="#c8c8c8" stroke="#e8e8e8" stroke-width="1"/></svg>
<!-- horizontal scrollbar -->
<div class="a" style="left:321px;top:795px;width:1374px;height:11px;background:#c0c0c0;border-top:1px solid #e8e8e8;border-bottom:1px solid #9a9a9a"></div>
<div class="a" style="left:321px;top:795px;width:12px;height:11px;background:#a8a8a8"></div>
<div class="a" style="left:1683px;top:795px;width:12px;height:11px;background:#a8a8a8"></div>
<svg class="a" style="left:321px;top:795px" width="1375" height="12"><polygon points="11,1 2,6 11,11" fill="#c8c8c8" stroke="#e8e8e8" stroke-width="1"/><polygon points="1363,1 1372,6 1363,11" fill="#c8c8c8" stroke="#e8e8e8" stroke-width="1"/></svg>

<!-- command line -->
<div class="a" style="left:325px;top:813px;width:1206px;height:21px;background:#efefef;border:1px solid #9a9a9a;border-right-color:#fff;border-bottom-color:#fff"></div>
<div class="a ui" style="left:327px;top:814px;color:#000;transform:scaleX(0.942)">top+sub_block2 1</div>
<div class="a" style="left:1533px;top:812px;width:20px;height:21px;background:#c40000;border:1px solid #e86060;border-right-color:#800000;border-bottom-color:#800000"></div>
<svg class="a" style="left:1533px;top:812px" width="20" height="21"><rect x="8" y="4" width="4" height="6" fill="#fff"/><polygon points="5,9 15,9 10,14" fill="#fff"/><rect x="5" y="15" width="10" height="2" fill="#fff"/></svg>
<div class="a ui" style="left:1576px;top:814px;color:#000;transform:scaleX(0.943)">auto update: 2000</div>

<!-- status bar -->
<div class="a" style="left:66px;top:841px;width:1650px;height:1px;background:#efefef"></div>
<div class="a" style="left:69px;top:849px;width:23px;height:23px;background:#00ff00"></div>
<div class="a" style="left:96px;top:847px;width:1142px;height:25px;border:2px solid #8a8a8a;border-right:1px solid #e0e0e0;border-bottom:1px solid #e0e0e0"></div>
<div class="a" style="left:1241px;top:847px;width:282px;height:25px;border:2px solid #8a8a8a;border-right:1px solid #e0e0e0;border-bottom:1px solid #e0e0e0"></div>
<div class="a ui" style="left:1324px;top:850px;transform:scaleX(0.963)">Design is mapped</div>
<div class="a" style="left:1527px;top:847px;width:186px;height:25px;border:2px solid #8a8a8a;border-right:1px solid #e0e0e0;border-bottom:1px solid #e0e0e0"></div>

<!-- watermark -->
<div class="a" style="left:791px;top:820px;font-family:'Liberation Serif',serif;font-size:32px;color:#7414d4;letter-spacing:8.9px;white-space:nowrap;text-shadow:0 0 1px #fff,0 0 1px #fff">EETOP</div>
<div class="a" style="left:797px;top:853px;font-size:13px;color:#8a8a8a;font-weight:bold;white-space:nowrap;letter-spacing:0.5px;text-shadow:0 0 1px #fff">中国电子顶级开发网</div>
</body></html>
